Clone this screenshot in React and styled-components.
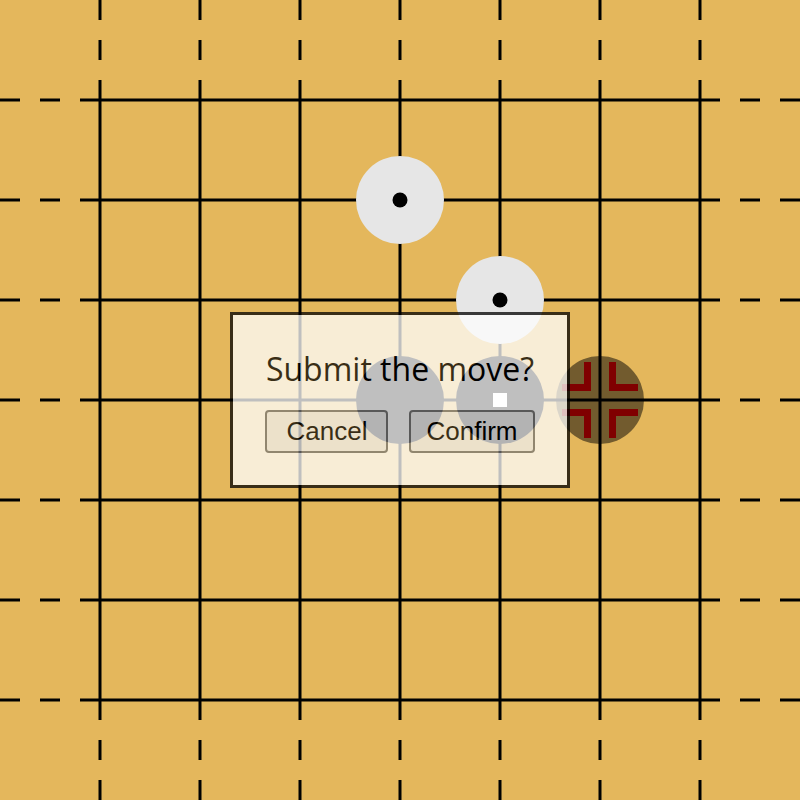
import React from 'react'
import styled, { createGlobalStyle } from 'styled-components'

const GlobalStyle = createGlobalStyle`
  html, body {
    margin: 0;
    padding: 0;
    background: #e4b75c;
  }
`

const Board = styled.div`
  position: relative;
  width: 800px;
  height: 800px;
  background: #e4b75c;
  overflow: hidden;
`

const BoardSvg = styled.svg`
  display: block;
`

const Dialog = styled.div`
  position: absolute;
  left: 230px;
  top: 312px;
  width: 340px;
  height: 176px;
  box-sizing: border-box;
  border: 3px solid #000;
  background: #fff;
  opacity: 0.75;
  display: flex;
  flex-direction: column;
  align-items: center;
  justify-content: center;
  gap: 20px;
`

const Title = styled.div`
  font-family: "Open Sans", sans-serif;
  font-size: 32px;
  color: #000;
`

const ButtonRow = styled.div`
  display: flex;
  gap: 21px;
`

const Button = styled.button`
  min-width: 123px;
  font-family: "Liberation Sans", Arial, sans-serif;
  font-size: 26px;
  color: #000;
  background: #efefef;
  border: 2px solid #767676;
  border-radius: 4px;
  padding: 5px 15px;
  line-height: 1.15;
`

const lines = [100, 200, 300, 400, 500, 600, 700]
const segments = [[0, 20], [40, 60], [80, 720], [740, 760], [780, 800]]

const whiteStones = [[400, 200], [500, 300]]
const blackStones = [[400, 400], [500, 400]]

function Grid () {
  return (
    <g stroke='#000' strokeWidth='3'>
      {lines.map(p => segments.map(([a, b]) => (
        <React.Fragment key={`${p}-${a}`}>
          <line x1={p} y1={a} x2={p} y2={b} />
          <line x1={a} y1={p} x2={b} y2={p} />
        </React.Fragment>
      )))}
    </g>
  )
}

function Marks ({ cx, cy }) {
  const quads = [[-1, -1], [1, -1], [-1, 1], [1, 1]]
  return (
    <g stroke='#800000' strokeWidth='7' fill='none' strokeLinejoin='miter'>
      {quads.map(([sx, sy]) => (
        <polyline
          key={`${sx}${sy}`}
          points={`${cx + sx * 38},${cy + sy * 12.5} ${cx + sx * 12.5},${cy + sy * 12.5} ${cx + sx * 12.5},${cy + sy * 38}`}
        />
      ))}
    </g>
  )
}

export default function App () {
  return (
    <>
      <GlobalStyle />
      <Board>
        <BoardSvg width='800' height='800' viewBox='0 0 800 800'>
          <Grid />
          {whiteStones.map(([x, y]) => (
            <g key={`w${x}${y}`}>
              <circle cx={x} cy={y} r='44' fill='#e6e6e6' />
              <circle cx={x} cy={y} r='7.5' fill='#000' />
            </g>
          ))}
          {blackStones.map(([x, y]) => (
            <circle key={`b${x}${y}`} cx={x} cy={y} r='44' fill='#000' />
          ))}
          <rect x='493' y='393' width='14' height='14' fill='#fff' />
          <circle cx='600' cy='400' r='44' fill='#000' opacity='0.5' />
          <Marks cx={600} cy={400} />
        </BoardSvg>
        <Dialog>
          <Title>Submit the move?</Title>
          <ButtonRow>
            <Button>Cancel</Button>
            <Button>Confirm</Button>
          </ButtonRow>
        </Dialog>
      </Board>
    </>
  )
}
